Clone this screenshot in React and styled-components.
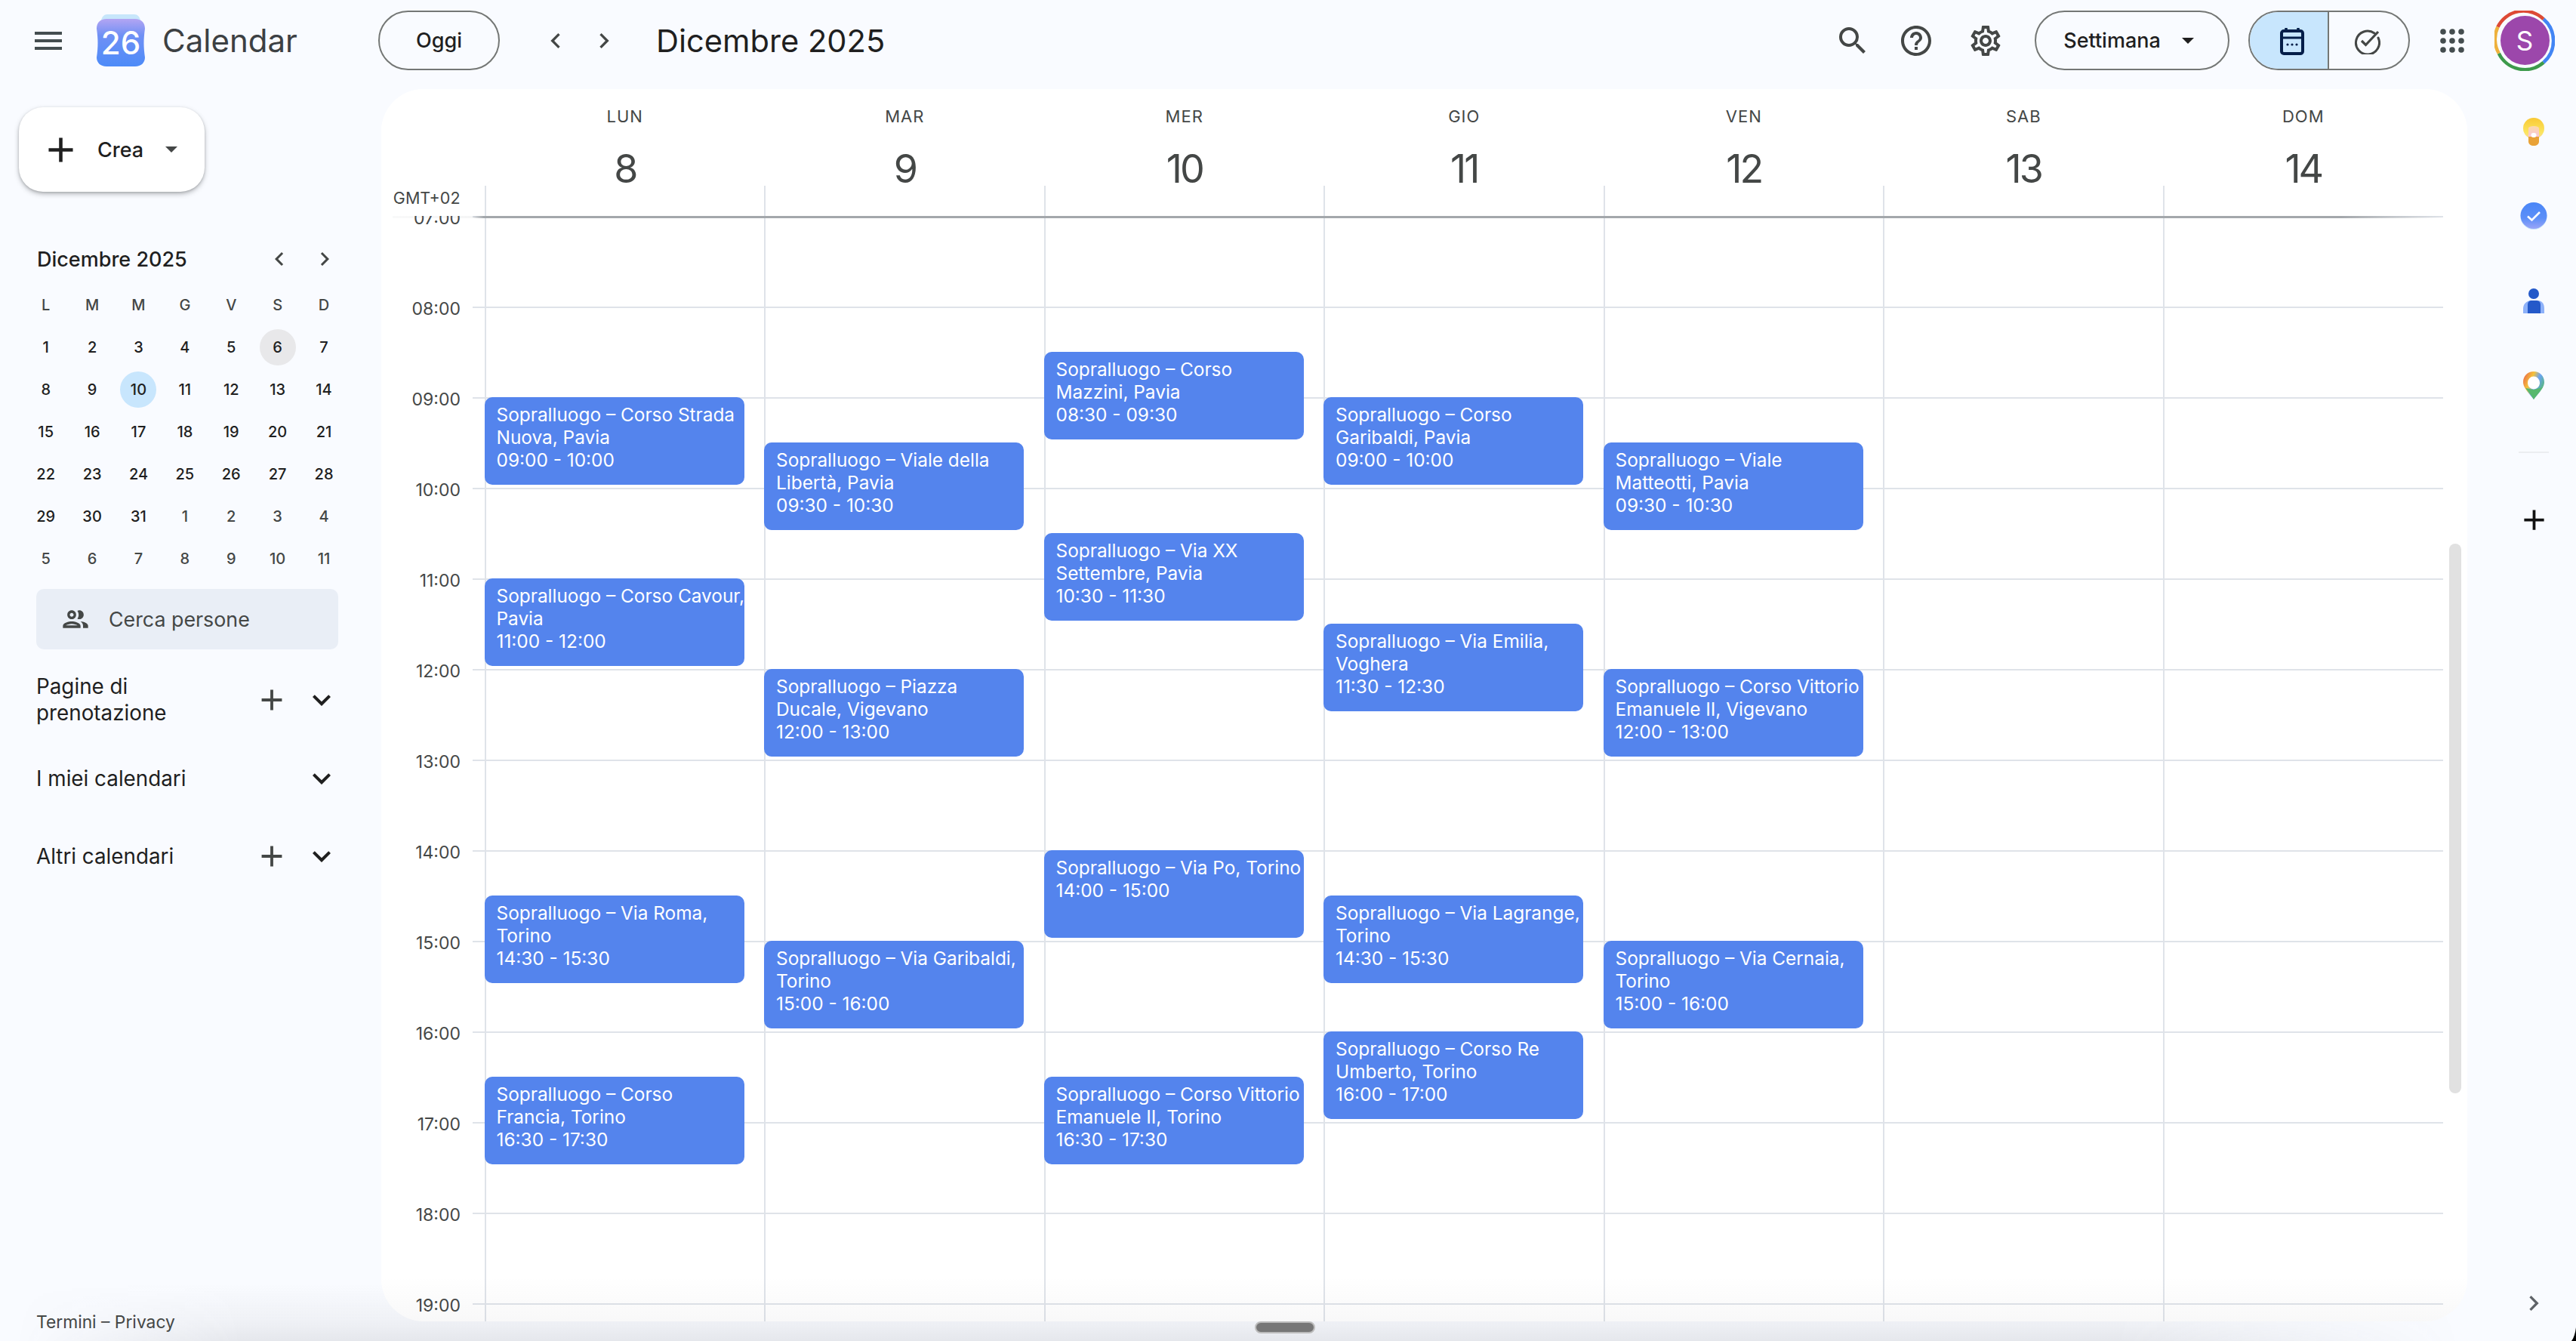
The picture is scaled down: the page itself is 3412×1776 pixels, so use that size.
import React from "react";
import styled, { createGlobalStyle } from "styled-components";
import {
  MdMenu,
  MdSearch,
  MdHelpOutline,
  MdOutlineSettings,
  MdChevronLeft,
  MdChevronRight,
  MdExpandMore,
  MdAdd,
  MdOutlinePeople,
} from "react-icons/md";

const HOUR = 120;
const FIRST_HOUR = 7;

const DAYS = [
  { name: "LUN", num: 8 },
  { name: "MAR", num: 9 },
  { name: "MER", num: 10 },
  { name: "GIO", num: 11 },
  { name: "VEN", num: 12 },
  { name: "SAB", num: 13 },
  { name: "DOM", num: 14 },
];

const HOURS = [7, 8, 9, 10, 11, 12, 13, 14, 15, 16, 17, 18, 19];

// one list per day, title keeps the line break of the picture
const EVENTS = [
  [
    { start: 9, title: "Sopralluogo – Corso Strada\nNuova, Pavia", time: "09:00 - 10:00" },
    { start: 11, title: "Sopralluogo – Corso Cavour,\nPavia", time: "11:00 - 12:00" },
    { start: 14.5, title: "Sopralluogo – Via Roma,\nTorino", time: "14:30 - 15:30" },
    { start: 16.5, title: "Sopralluogo – Corso\nFrancia, Torino", time: "16:30 - 17:30" },
  ],
  [
    { start: 9.5, title: "Sopralluogo – Viale della\nLibertà, Pavia", time: "09:30 - 10:30" },
    { start: 12, title: "Sopralluogo – Piazza\nDucale, Vigevano", time: "12:00 - 13:00" },
    { start: 15, title: "Sopralluogo – Via Garibaldi,\nTorino", time: "15:00 - 16:00" },
  ],
  [
    { start: 8.5, title: "Sopralluogo – Corso\nMazzini, Pavia", time: "08:30 - 09:30" },
    { start: 10.5, title: "Sopralluogo – Via XX\nSettembre, Pavia", time: "10:30 - 11:30" },
    { start: 14, title: "Sopralluogo – Via Po, Torino", time: "14:00 - 15:00" },
    { start: 16.5, title: "Sopralluogo – Corso Vittorio\nEmanuele II, Torino", time: "16:30 - 17:30" },
  ],
  [
    { start: 9, title: "Sopralluogo – Corso\nGaribaldi, Pavia", time: "09:00 - 10:00" },
    { start: 11.5, title: "Sopralluogo – Via Emilia,\nVoghera", time: "11:30 - 12:30" },
    { start: 14.5, title: "Sopralluogo – Via Lagrange,\nTorino", time: "14:30 - 15:30" },
    { start: 16, title: "Sopralluogo – Corso Re\nUmberto, Torino", time: "16:00 - 17:00" },
  ],
  [
    { start: 9.5, title: "Sopralluogo – Viale\nMatteotti, Pavia", time: "09:30 - 10:30" },
    { start: 12, title: "Sopralluogo – Corso Vittorio\nEmanuele II, Vigevano", time: "12:00 - 13:00" },
    { start: 15, title: "Sopralluogo – Via Cernaia,\nTorino", time: "15:00 - 16:00" },
  ],
  [],
  [],
];

const MINI_HEAD = ["L", "M", "M", "G", "V", "S", "D"];
const MINI_DAYS = [
  1, 2, 3, 4, 5, 6, 7, 8, 9, 10, 11, 12, 13, 14, 15, 16, 17, 18, 19, 20, 21, 22, 23, 24, 25, 26, 27,
  28, 29, 30, 31, 1, 2, 3, 4, 5, 6, 7, 8, 9, 10, 11,
];

const GlobalStyle = createGlobalStyle`
  html, body {
    margin: 0;
    padding: 0;
    overflow: hidden;
    background: #f9fbff;
  }
  * {
    box-sizing: border-box;
  }
`;

const Page = styled.div`
  position: relative;
  width: 3412px;
  height: 1776px;
  overflow: hidden;
  background: #f9fbff;
  color: #1f1f1f;
  font-family: Inter, Roboto, "Liberation Sans", sans-serif;
`;

const BottomShade = styled.div`
  position: absolute;
  left: 0;
  right: 0;
  bottom: 0;
  height: 76px;
  background: linear-gradient(to bottom, rgba(60, 60, 70, 0), rgba(60, 60, 70, 0.05) 65%, rgba(60, 60, 70, 0.1));
  mask-image: linear-gradient(to right, transparent 20px, black 320px, black 2800px, transparent 3260px);
`;

const TopBar = styled.header`
  position: relative;
  display: flex;
  align-items: center;
  height: 118px;
  padding: 14px 28px 25px 0;
`;

const Brand = styled.div`
  display: flex;
  align-items: center;
  width: 501px;
  padding-left: 40px;
  color: #444d4f;
`;

const LogoWrap = styled.div`
  display: flex;
  margin-left: 40px;
`;

const BrandName = styled.span`
  margin-left: 23px;
  font-size: 42px;
  color: #3c4043;
`;

const PillButton = styled.div`
  display: flex;
  align-items: center;
  justify-content: center;
  height: 79px;
  border: 2px solid #747775;
  border-radius: 40px;
  font-size: 27px;
  font-weight: 500;
  width: ${(p) => p.$width}px;
  margin-left: ${(p) => p.$gap || 0}px;
`;

const Caret = styled.span`
  width: 0;
  height: 0;
  border-left: 8px solid transparent;
  border-right: 8px solid transparent;
  border-top: 8px solid ${(p) => p.$color || "#1f1f1f"};
  margin-left: ${(p) => p.$gap}px;
  margin-right: ${(p) => p.$after || 0}px;
`;

const NavGroup = styled.div`
  display: flex;
  gap: 24px;
  margin-left: 54px;
  color: #444746;
`;

const PageTitle = styled.h1`
  margin: 0 0 0 49px;
  font-size: 41.6px;
  font-weight: 400;
  color: #1f1f1f;
`;

const TopRight = styled.div`
  display: flex;
  align-items: center;
  margin-left: auto;
`;

const TopIcon = styled.div`
  display: flex;
  color: #444746;
  margin-left: ${(p) => p.$gap || 0}px;
`;

const ViewToggle = styled.div`
  display: flex;
  width: 214px;
  height: 79px;
  margin-left: 25px;
  border: 2px solid #747775;
  border-radius: 40px;
  overflow: hidden;
`;

const ToggleHalf = styled.div`
  display: flex;
  align-items: center;
  justify-content: center;
  width: 50%;
  padding: ${(p) => (p.$active ? "0 0 0 8px" : "0 6px 0 0")};
  background: ${(p) => (p.$active ? "#c8e6fd" : "transparent")};
  border-right: ${(p) => (p.$active ? "2px solid #747775" : "none")};
`;

const AvatarWrap = styled.div`
  position: relative;
  display: flex;
  align-items: center;
  justify-content: center;
  width: 80px;
  height: 80px;
  margin-left: 40px;
`;

const AvatarRing = styled.svg`
  position: absolute;
  inset: 0;
`;

const Avatar = styled.div`
  display: flex;
  align-items: center;
  justify-content: center;
  width: 65px;
  height: 65px;
  border-radius: 50%;
  background: #9c47ab;
  color: #fff;
  font-size: 35px;
`;

const Main = styled.div`
  position: relative;
  display: flex;
  height: 1658px;
`;

const Sidebar = styled.aside`
  display: flex;
  flex-direction: column;
  width: 505px;
  flex: none;
`;

const CreateButton = styled.div`
  display: flex;
  align-items: center;
  width: 246px;
  height: 112px;
  margin: 24px 0 0 25px;
  padding-left: 28px;
  background: #fff;
  border-radius: 32px;
  box-shadow: 0 3px 6px rgba(60, 64, 67, 0.35), 0 1px 3px rgba(60, 64, 67, 0.2);
  font-size: 27px;
  font-weight: 500;
`;

const CreateLabel = styled.span`
  margin-left: 21px;
`;

const MiniHeader = styled.div`
  display: flex;
  align-items: center;
  width: 448px;
  height: 40px;
  margin-top: 69px;
  padding-left: 49px;
`;

const MiniTitle = styled.span`
  font-size: 27px;
  font-weight: 500;
`;

const MiniNav = styled.div`
  display: flex;
  gap: 24px;
  margin-left: auto;
  color: #444746;
`;

const MiniGrid = styled.div`
  display: grid;
  grid-template-columns: repeat(7, 61.4px);
  grid-auto-rows: 56px;
  width: 430px;
  margin: 13px 0 0 30px;
`;

const MiniCell = styled.div`
  display: flex;
  align-items: center;
  justify-content: center;
`;

const MiniDay = styled.span`
  display: flex;
  align-items: center;
  justify-content: center;
  width: 48px;
  height: 48px;
  border-radius: 50%;
  font-size: 20px;
  font-weight: 500;
  color: ${(p) => (p.$muted ? "#444746" : "#1f1f1f")};
  background: ${(p) => p.$bg || "transparent"};
`;

const PeopleSearch = styled.div`
  display: flex;
  align-items: center;
  gap: 24px;
  width: 400px;
  height: 80px;
  margin: 12px 0 0 48px;
  padding-left: 32px;
  background: #e9eef6;
  border-radius: 10px;
  font-size: 26.8px;
  color: #444746;
`;

const SectionRow = styled.div`
  display: flex;
  align-items: center;
  width: 450px;
  padding-left: 48px;
  margin-top: ${(p) => p.$gap}px;
`;

const SectionTitle = styled.span`
  flex: 1;
  font-size: 27.8px;
  line-height: 35px;
  font-weight: 400;
  color: #1f1f1f;
`;

const SectionIcon = styled.span`
  display: flex;
  color: ${(p) => p.$color || "#444746"};
  margin-left: ${(p) => p.$gap || 0}px;
`;

const Footer = styled.div`
  margin-top: auto;
  padding: 0 0 11px 48px;
  font-size: 22.8px;
  line-height: 28px;
  color: #444746;
`;

const Panel = styled.section`
  position: relative;
  display: flex;
  flex-direction: column;
  width: 2763px;
  flex: none;
  height: 1632px;
  background: #fff;
  border-radius: 56px;
  overflow: hidden;

  &::after {
    content: "";
    position: absolute;
    left: 0;
    right: 0;
    bottom: 0;
    height: 60px;
    pointer-events: none;
    background: linear-gradient(to bottom, rgba(40, 40, 50, 0), rgba(40, 40, 50, 0.03));
  }
`;

const HeaderRow = styled.div`
  position: relative;
  display: flex;
  height: 168px;
  flex: none;
  z-index: 2;
  background: #fff;

  &::after {
    content: "";
    position: absolute;
    left: 15px;
    width: 2716px;
    bottom: -3px;
    height: 3px;
    background: linear-gradient(
      to right,
      rgba(150, 155, 160, 0.06),
      rgba(150, 155, 160, 0.1) 106px,
      #a3a7ab 121px,
      #a3a7ab 2580px,
      rgba(163, 167, 171, 0) 2716px
    );
  }
`;

const GmtCell = styled.div`
  width: 136.5px;
  flex: none;
  padding: 131px 32px 0 0;
  text-align: right;
  font-size: 21.5px;
  line-height: 26px;
  color: #444746;
  white-space: nowrap;
`;

const DayHeads = styled.div`
  display: grid;
  grid-template-columns: repeat(7, 370.5px);
`;

const DayHead = styled.div`
  position: relative;
  display: flex;
  flex-direction: column;
  align-items: center;
  padding: 24px 0 0 2px;
  color: #444746;

  &::before {
    content: "";
    position: absolute;
    left: 0;
    bottom: 0;
    width: 2px;
    height: 40px;
    background: #dfe3e9;
  }
`;

const DayName = styled.span`
  font-size: 22px;
  line-height: 24px;
  letter-spacing: 1px;
  font-weight: 400;
`;

const DayNumber = styled.span`
  margin-top: 28px;
  font-size: 52px;
  line-height: 60px;
  font-weight: 400;
  letter-spacing: -3px;
`;

const Body = styled.div`
  position: relative;
  flex: 1;
  overflow: hidden;
`;

const HourRow = styled.div`
  display: flex;
  align-items: flex-start;
  height: ${HOUR}px;
`;

const HourLabel = styled.span`
  width: 105px;
  flex: none;
  margin-top: -11px;
  text-align: right;
  font-size: 23px;
  line-height: 28px;
  color: #444746;
`;

const HourRule = styled.div`
  width: 2610px;
  height: 2px;
  margin-left: 16px;
  background: #dfe3e9;
`;

const DayColumns = styled.div`
  position: absolute;
  top: 0;
  bottom: 0;
  left: 136.5px;
  display: grid;
  grid-template-columns: repeat(7, 370.5px);
`;

const DayColumn = styled.div`
  position: relative;
  border-left: 2px solid #dfe3e9;
`;

const EventCard = styled.div`
  position: absolute;
  left: -2px;
  top: ${(p) => (p.$start - FIRST_HOUR) * HOUR}px;
  width: 344px;
  height: 116px;
  padding: 8px 0 0 16px;
  background: #5484ed;
  border-radius: 10px;
  color: #fff;
  font-size: 24.4px;
  line-height: 30px;
  white-space: nowrap;
`;

const EventTitle = styled.div`
  white-space: pre;
`;

const ScrollThumb = styled.div`
  position: absolute;
  top: 602px;
  left: 2739px;
  width: 16px;
  height: 728px;
  background: #e1e1e1;
  border-radius: 8px;
  z-index: 3;
`;

const Rail = styled.aside`
  display: flex;
  flex-direction: column;
  align-items: center;
  width: 144px;
  flex: none;
  padding: 0 0 30px 32px;
`;

const RailSlot = styled.div`
  display: flex;
  align-items: center;
  justify-content: center;
  height: 112px;
`;

const RailDivider = styled.div`
  width: 40px;
  height: 2px;
  margin-top: 32px;
  background: #eceef1;
`;

const RailAdd = styled.div`
  display: flex;
  margin-top: 66px;
  color: #111;
`;

const RailToggle = styled.div`
  display: flex;
  margin-top: auto;
  color: #5f6368;
`;

const HomeHandle = styled.div`
  position: absolute;
  left: 1662px;
  bottom: 10px;
  width: 80px;
  height: 16px;
  background: #777;
  border: 2px solid #bcbcbc;
  border-radius: 8px;
  z-index: 4;
`;

const CornerMark = styled.svg`
  position: absolute;
  right: 0;
  bottom: 0;
`;

const CalendarLogo = () => (
  <svg width="64" height="69" viewBox="0 0 64 69">
    <defs>
      <linearGradient id="logoFill" x1="0" y1="0" x2="0" y2="1">
        <stop offset="0" stopColor="#b3a5f3" />
        <stop offset="0.35" stopColor="#6f90f5" />
        <stop offset="1" stopColor="#4d8bf8" />
      </linearGradient>
    </defs>
    <path d="M14 0H50C54 0 57 3 58 8H6C7 3 10 0 14 0Z" fill="#c7e6fb" />
    <path
      d="M13 6H51C59 6 64 11 64 19C62 33 62 43 64 57C64 64 59 69 51 69H13C5 69 0 64 0 57C2 43 2 33 0 19C0 11 5 6 13 6Z"
      fill="url(#logoFill)"
    />
    <text x="32" y="53" textAnchor="middle" fontFamily="Inter, sans-serif" fontSize="42" fontWeight="500" fill="#fff">
      26
    </text>
  </svg>
);

const CalendarViewIcon = () => (
  <svg width="34" height="38" viewBox="0 0 34 38" fill="none">
    <rect x="3" y="6" width="28" height="30" rx="3" stroke="#041e49" strokeWidth="4" />
    <path d="M4 15H30" stroke="#041e49" strokeWidth="3" />
    <path d="M9 2V8M25 2V8" stroke="#041e49" strokeWidth="3.5" />
    <circle cx="11" cy="24" r="1.6" fill="#041e49" />
    <circle cx="17" cy="24" r="1.6" fill="#041e49" />
    <circle cx="23" cy="24" r="1.6" fill="#041e49" />
  </svg>
);

const TasksViewIcon = () => (
  <svg width="36" height="36" viewBox="0 0 36 36" fill="none">
    <path
      d="M28 8A15.5 15.5 0 1 0 33 14"
      stroke="#444746"
      strokeWidth="3"
      strokeLinecap="round"
    />
    <path d="M11 18L16.5 23.5L33 6" stroke="#444746" strokeWidth="3.2" />
  </svg>
);

const AppsIcon = () => (
  <svg width="32" height="32" viewBox="0 0 32 32" fill="#444d4f">
    {[4, 16, 28].map((y) =>
      [4, 16, 28].map((x) => <circle key={`${x}-${y}`} cx={x} cy={y} r="3.8" />)
    )}
  </svg>
);

const KeepIcon = () => (
  <svg width="28" height="37" viewBox="0 0 28 37">
    <defs>
      <linearGradient id="keepBulb" x1="0" y1="0" x2="0" y2="1">
        <stop offset="0" stopColor="#f9c935" />
        <stop offset="0.7" stopColor="#fbe560" />
        <stop offset="1" stopColor="#f8d9a0" />
      </linearGradient>
      <linearGradient id="keepGlow" x1="0" y1="0" x2="0" y2="1">
        <stop offset="0" stopColor="#fbd9a8" />
        <stop offset="1" stopColor="#f9c6d8" />
      </linearGradient>
    </defs>
    <circle cx="14" cy="14" r="14" fill="url(#keepBulb)" />
    <path d="M7 25H21V31C21 35 18 37 14 37C10 37 7 35 7 31Z" fill="#e9a237" />
    <path d="M7 14C7 12 10 11 14 11C18 11 21 12 21 14V25H7Z" fill="url(#keepGlow)" />
    <rect x="10.5" y="20" width="7" height="6" rx="3" fill="#fff" />
  </svg>
);

const TasksIcon = () => (
  <svg width="36" height="36" viewBox="0 0 36 36">
    <defs>
      <linearGradient id="tasksDisc" x1="0" y1="0" x2="0" y2="1">
        <stop offset="0" stopColor="#4a86f7" />
        <stop offset="0.6" stopColor="#5c8ff8" />
        <stop offset="1" stopColor="#9aa5f8" />
      </linearGradient>
    </defs>
    <circle cx="18" cy="18.5" r="17.5" fill="#c5e5fb" />
    <circle cx="18" cy="17.5" r="17.5" fill="url(#tasksDisc)" />
    <path d="M10 18.5L15.5 23.5L26 13" fill="none" stroke="#fff" strokeWidth="2.6" />
  </svg>
);

const ContactsIcon = () => (
  <svg width="28" height="33" viewBox="0 0 28 33">
    <circle cx="14" cy="7" r="7" fill="#2459c9" />
    <path d="M0 27C0 20 5 16 11 16H19C25 16 28 20 28 27V33H0Z" fill="#8db1f9" />
    <path d="M6 22C6 18 8 16 11 16H17C21 16 23 18 23 22V33H6Z" fill="#2459c9" />
  </svg>
);

const MapsIcon = () => (
  <svg width="28" height="37" viewBox="0 0 28 37">
    <defs>
      <linearGradient id="mapsRing" x1="0" y1="0" x2="1" y2="0.6">
        <stop offset="0" stopColor="#e8574a" />
        <stop offset="0.4" stopColor="#f5c33b" />
        <stop offset="0.65" stopColor="#6aa4f5" />
        <stop offset="1" stopColor="#57b86e" />
      </linearGradient>
    </defs>
    <path d="M14 0C22 0 28 6 28 14C28 22 20 29 14 37C8 29 0 22 0 14C0 6 6 0 14 0Z" fill="url(#mapsRing)" />
    <path d="M3 22C7 27 11 32 14 37C17 32 22 27 26 21L14 24Z" fill="#57b86e" />
    <ellipse cx="14" cy="15" rx="8" ry="8.5" fill="#fff" />
  </svg>
);

function App() {
  return (
    <Page>
      <GlobalStyle />
      <BottomShade />

      <TopBar>
        <Brand>
          <MdMenu size={48} />
          <LogoWrap>
            <CalendarLogo />
          </LogoWrap>
          <BrandName>Calendar</BrandName>
        </Brand>
        <PillButton $width={161}>Oggi</PillButton>
        <NavGroup>
          <MdChevronLeft size={40} />
          <MdChevronRight size={40} />
        </NavGroup>
        <PageTitle>Dicembre 2025</PageTitle>
        <TopRight>
          <TopIcon>
            <MdSearch size={48} />
          </TopIcon>
          <TopIcon $gap={36}>
            <MdHelpOutline size={48} />
          </TopIcon>
          <TopIcon $gap={44}>
            <MdOutlineSettings size={48} />
          </TopIcon>
          <PillButton $width={258} $gap={41}>
            Settimana
            <Caret $gap={28} $after={9} />
          </PillButton>
          <ViewToggle>
            <ToggleHalf $active>
              <CalendarViewIcon />
            </ToggleHalf>
            <ToggleHalf>
              <TasksViewIcon />
            </ToggleHalf>
          </ViewToggle>
          <TopIcon $gap={40}>
            <AppsIcon />
          </TopIcon>
          <AvatarWrap>
            <AvatarRing width="80" height="80" viewBox="0 0 80 80" fill="none" strokeWidth="4.5">
              <path d="M4.4 21.7A38 38 0 0 1 65 11.3" stroke="#dd4a35" />
              <path d="M65 11.3A38 38 0 0 1 65 68.7" stroke="#4285f4" />
              <path d="M65 68.7A38 38 0 0 1 5.8 56.7" stroke="#3d9a4b" />
              <path d="M5.8 56.7A38 38 0 0 1 4.4 21.7" stroke="#eeb13c" />
            </AvatarRing>
            <Avatar>S</Avatar>
          </AvatarWrap>
        </TopRight>
      </TopBar>

      <Main>
        <Sidebar>
          <CreateButton>
            <MdAdd size={55} />
            <CreateLabel>Crea</CreateLabel>
            <Caret $gap={29} $color="#444746" />
          </CreateButton>

          <MiniHeader>
            <MiniTitle>Dicembre 2025</MiniTitle>
            <MiniNav>
              <MdChevronLeft size={36} />
              <MdChevronRight size={36} />
            </MiniNav>
          </MiniHeader>
          <MiniGrid>
            {MINI_HEAD.map((d, i) => (
              <MiniCell key={`h${i}`}>
                <MiniDay $muted>{d}</MiniDay>
              </MiniCell>
            ))}
            {MINI_DAYS.map((d, i) => {
              const muted = i >= 31;
              let bg;
              if (i === 5) bg = "#e8e8ea";
              if (i === 9) bg = "#c8e6fd";
              return (
                <MiniCell key={i}>
                  <MiniDay $muted={muted} $bg={bg}>
                    {d}
                  </MiniDay>
                </MiniCell>
              );
            })}
          </MiniGrid>

          <PeopleSearch>
            <MdOutlinePeople size={40} />
            Cerca persone
          </PeopleSearch>

          <SectionRow $gap={32}>
            <SectionTitle>
              Pagine di
              <br />
              prenotazione
            </SectionTitle>
            <SectionIcon>
              <MdAdd size={46} />
            </SectionIcon>
            <SectionIcon $gap={19} $color="#1f1f1f">
              <MdExpandMore size={48} />
            </SectionIcon>
          </SectionRow>
          <SectionRow $gap={45}>
            <SectionTitle>I miei calendari</SectionTitle>
            <SectionIcon $color="#1f1f1f">
              <MdExpandMore size={48} />
            </SectionIcon>
          </SectionRow>
          <SectionRow $gap={55}>
            <SectionTitle>Altri calendari</SectionTitle>
            <SectionIcon>
              <MdAdd size={46} />
            </SectionIcon>
            <SectionIcon $gap={19} $color="#1f1f1f">
              <MdExpandMore size={48} />
            </SectionIcon>
          </SectionRow>

          <Footer>Termini – Privacy</Footer>
        </Sidebar>

        <Panel>
          <HeaderRow>
            <GmtCell>GMT+02</GmtCell>
            <DayHeads>
              {DAYS.map((d) => (
                <DayHead key={d.name}>
                  <DayName>{d.name}</DayName>
                  <DayNumber>{d.num}</DayNumber>
                </DayHead>
              ))}
            </DayHeads>
          </HeaderRow>
          <Body>
            {HOURS.map((h) => (
              <HourRow key={h}>
                <HourLabel>{`${String(h).padStart(2, "0")}:00`}</HourLabel>
                <HourRule />
              </HourRow>
            ))}
            <DayColumns>
              {EVENTS.map((list, i) => (
                <DayColumn key={i}>
                  {list.map((ev) => (
                    <EventCard key={ev.time} $start={ev.start}>
                      <EventTitle>{ev.title}</EventTitle>
                      <div>{ev.time}</div>
                    </EventCard>
                  ))}
                </DayColumn>
              ))}
            </DayColumns>
          </Body>
          <ScrollThumb />
        </Panel>

        <Rail>
          <RailSlot>
            <KeepIcon />
          </RailSlot>
          <RailSlot>
            <TasksIcon />
          </RailSlot>
          <RailSlot>
            <ContactsIcon />
          </RailSlot>
          <RailSlot>
            <MapsIcon />
          </RailSlot>
          <RailDivider />
          <RailAdd>
            <MdAdd size={45} />
          </RailAdd>
          <RailToggle>
            <MdChevronRight size={40} />
          </RailToggle>
        </Rail>
      </Main>

      <HomeHandle />
      <CornerMark width="6" height="18" viewBox="0 0 6 18">
        <path d="M6 0V18H0C3 14 5 8 6 0Z" fill="#000" />
      </CornerMark>
    </Page>
  );
}

export default App;
